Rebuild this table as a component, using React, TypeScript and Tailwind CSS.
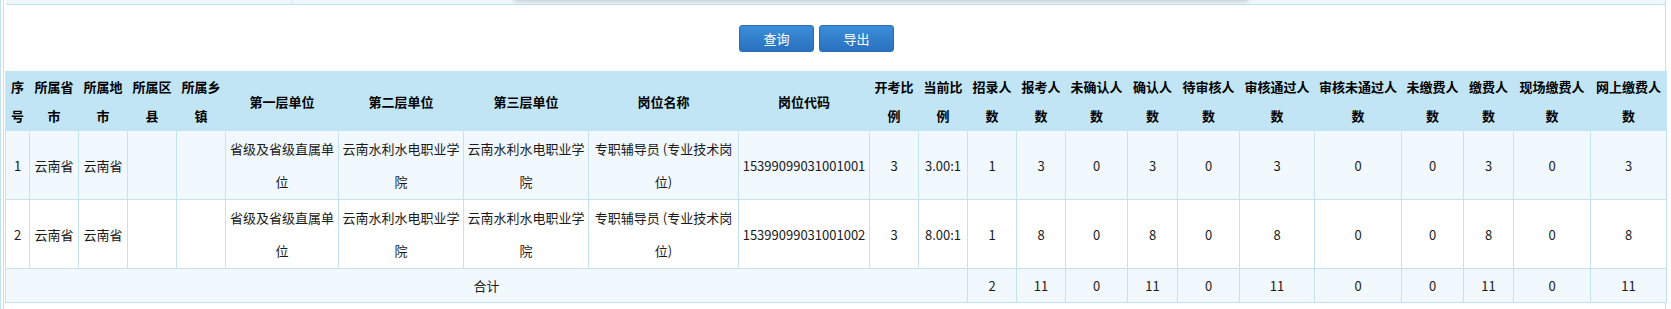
import React from 'react';

// 报考统计表 — 查询结果区域
const cols = [24, 49, 49, 49, 49, 113, 125, 125, 150, 131, 49, 49, 49, 49, 62, 50, 62, 75, 87, 62, 50, 77, 76];

const headers: string[][] = [
  ['序', '号'],
  ['所属省', '市'],
  ['所属地', '市'],
  ['所属区', '县'],
  ['所属乡', '镇'],
  ['第一层单位'],
  ['第二层单位'],
  ['第三层单位'],
  ['岗位名称'],
  ['岗位代码'],
  ['开考比', '例'],
  ['当前比', '例'],
  ['招录人', '数'],
  ['报考人', '数'],
  ['未确认人', '数'],
  ['确认人', '数'],
  ['待审核人', '数'],
  ['审核通过人', '数'],
  ['审核未通过人', '数'],
  ['未缴费人', '数'],
  ['缴费人', '数'],
  ['现场缴费人', '数'],
  ['网上缴费人', '数'],
];

const rows: string[][][] = [
  [
    ['1'], ['云南省'], ['云南省'], [''], [''],
    ['省级及省级直属单', '位'],
    ['云南水利水电职业学', '院'],
    ['云南水利水电职业学', '院'],
    ['专职辅导员 (专业技术岗', '位)'],
    ['15399099031001001'],
    ['3'], ['3.00:1'], ['1'], ['3'], ['0'], ['3'], ['0'], ['3'], ['0'], ['0'], ['3'], ['0'], ['3'],
  ],
  [
    ['2'], ['云南省'], ['云南省'], [''], [''],
    ['省级及省级直属单', '位'],
    ['云南水利水电职业学', '院'],
    ['云南水利水电职业学', '院'],
    ['专职辅导员 (专业技术岗', '位)'],
    ['15399099031001002'],
    ['3'], ['8.00:1'], ['1'], ['8'], ['0'], ['8'], ['0'], ['8'], ['0'], ['0'], ['8'], ['0'], ['8'],
  ],
];

const totals = ['2', '11', '0', '11', '0', '11', '0', '0', '11', '0', '11'];

function Lines({ parts }: { parts: string[] }) {
  return (
    <>
      {parts.map((p, i) => (
        <React.Fragment key={i}>
          {i > 0 && <br />}
          {p}
        </React.Fragment>
      ))}
    </>
  );
}

export default function App() {
  return (
    <div
      className="relative h-[309px] w-[1671px] overflow-hidden bg-white text-[13px]"
      style={{ fontFamily: '"Noto Sans CJK SC", "Noto Sans", sans-serif' }}
    >
      {/* 上方下拉层的阴影 */}
      <div className="absolute left-[514px] top-[-30px] z-10 h-[30px] w-[734px] bg-white shadow-[0_1px_5px_rgba(0,0,0,0.22)]" />

      <div className="h-full border-l border-[#c3e1f4] pl-[2px]">
        <div className="h-full w-[1663px] border-x border-[#c3e1f4]">
          {/* 查询条件区底边 */}
          <div className="ml-[2px] flex h-[5px] border-b border-[#c3e1f4] bg-[#eef7fd]">
            <div className="w-[287px] border-r border-[#d5e8f5]" />
            <div className="flex-1" />
          </div>

          {/* 按钮 */}
          <div className="flex justify-center gap-[5px] pr-[36px] pt-[20px]">
            <button className="h-[27px] w-[75px] rounded-[3px] border border-[#2a6db6] bg-gradient-to-b from-[#3b8ed8] to-[#2a71c0] text-[13px] text-white">
              查询
            </button>
            <button className="h-[27px] w-[75px] rounded-[3px] border border-[#2a6db6] bg-gradient-to-b from-[#3b8ed8] to-[#2a71c0] text-[13px] text-white">
              导出
            </button>
          </div>

          {/* 统计表 */}
          <table className="ml-[1px] mt-[19px] w-[1661px] table-fixed border-collapse text-center">
            <colgroup>
              {cols.map((w, i) => (
                <col key={i} style={{ width: w }} />
              ))}
            </colgroup>
            <thead>
              <tr className="bg-[#c1e5f5]">
                {headers.map((h, i) => (
                  <th
                    key={i}
                    className="whitespace-nowrap border border-[#c1e5f5] p-0 align-middle text-[13px] font-bold leading-[29px] text-black"
                  >
                    <Lines parts={h} />
                  </th>
                ))}
              </tr>
            </thead>
            <tbody>
              {rows.map((r, ri) => (
                <tr key={ri} className={ri % 2 === 0 ? 'bg-[#f1f8fe]' : 'bg-white'}>
                  {r.map((c, ci) => (
                    <td
                      key={ci}
                      className="whitespace-nowrap border border-[#c6e1f3] px-0 py-px align-middle leading-[33px] text-[#1a1a1a]"
                    >
                      <Lines parts={c} />
                    </td>
                  ))}
                </tr>
              ))}
              <tr className="bg-[#f1f8fe]">
                <td colSpan={12} className="border border-[#c6e1f3] py-0 leading-[33px] text-[#1a1a1a]">
                  合计
                </td>
                {totals.map((t, i) => (
                  <td key={i} className="border border-[#c6e1f3] py-0 leading-[33px] text-[#1a1a1a]">
                    {t}
                  </td>
                ))}
              </tr>
            </tbody>
          </table>
        </div>
      </div>
    </div>
  );
}
